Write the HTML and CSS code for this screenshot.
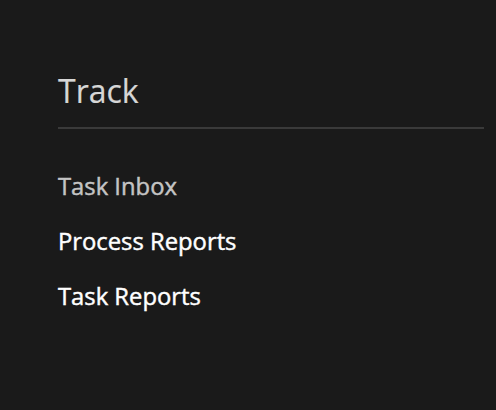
FILE: index.html
```html
<!DOCTYPE html>
<html>
<head>
<meta charset="utf-8">
<link rel="stylesheet" href="styles.css">
</head>
<body>
<nav class="menu">
  <h2 class="menu-title">Track</h2>
  <ul class="menu-list">
    <li class="menu-item muted">Task Inbox</li>
    <li class="menu-item">Process Reports</li>
    <li class="menu-item">Task Reports</li>
  </ul>
</nav>
</body>
</html>
```

FILE: styles.css
```css
html, body {
  margin: 0;
  padding: 0;
  background: #1a1a1a;
  height: 100%;
}
body {
  font-family: "Open Sans", "Noto Sans", sans-serif;
}
.menu {
  padding: 69px 12px 0 58px;
}
.menu-title {
  margin: 0;
  font-weight: 400;
  font-size: 32px;
  line-height: 44px;
  color: #d6d6d6;
  padding-bottom: 14px;
  border-bottom: 2px solid #3a3a3a;
  -webkit-text-stroke: 0.2px currentColor;
}
.menu-list {
  list-style: none;
  margin: 0;
  padding: 41px 0 0;
  display: flex;
  flex-direction: column;
  gap: 23px;
}
.menu-item {
  font-size: 23.8px;
  font-weight: 400;
  line-height: 32px;
  color: #ffffff;
  -webkit-text-stroke: 0.45px currentColor;
}
.menu-item.muted {
  color: #c4c4c4;
}
```
